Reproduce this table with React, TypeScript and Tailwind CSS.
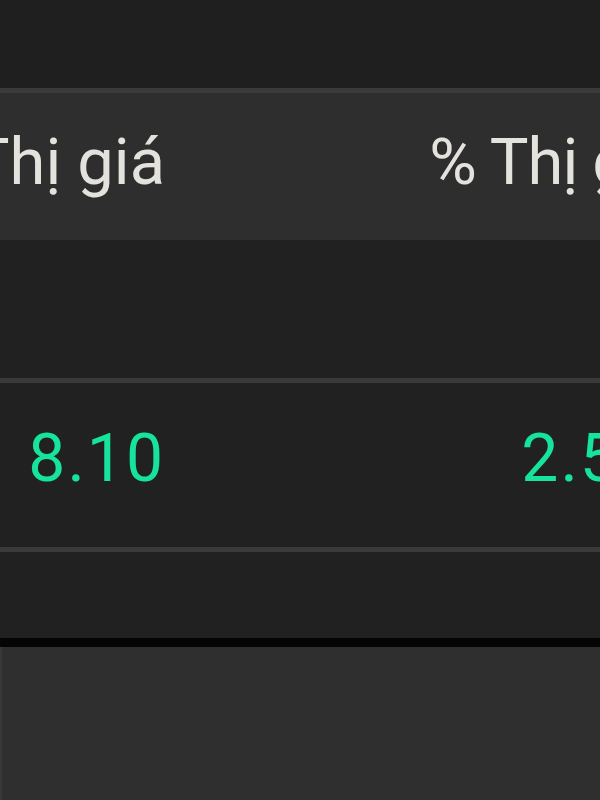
export default function App() {
  const cols = [
    { head: 'Thị giá', value: '8.10', headWidth: 'w-[165px]', valueWidth: 'w-[165px]' },
    { head: '% Thị giá', value: '2.50', headWidth: 'w-[512px]', valueWidth: 'w-[493px]' },
  ];

  return (
    <div className="w-[600px] h-[800px] overflow-hidden bg-[#1f1f1f] flex flex-col font-['Roboto',sans-serif]">
      {/* toolbar gap */}
      <div className="h-[88px] shrink-0 bg-[#1f1f1f]" />

      {/* Header */}
      <div className="h-[152px] shrink-0 border-t-[5px] border-[#3a3a3a] bg-[#2e2e2e] flex items-center pb-[8px]">
        {cols.map((c, i) => (
          <div key={c.head} className={`${c.headWidth} shrink-0 flex justify-end whitespace-nowrap`}>
            <span
              className={`text-[65px] leading-none text-[#e4e2dc] ${i === 1 ? 'tracking-[-1px]' : ''}`}
            >
              {c.head}
            </span>
          </div>
        ))}
      </div>

      {/* Empty row */}
      <div className="h-[143px] shrink-0 bg-[#212121] border-b-[5px] border-[#3a3a3a]" />

      {/* Value row */}
      <div className="h-[169px] shrink-0 bg-[#212121] border-b-[5px] border-[#3a3a3a] flex items-center pb-[12px]">
        {cols.map((c) => (
          <div key={c.head} className={`${c.valueWidth} shrink-0 flex justify-end whitespace-nowrap`}>
            <span className="text-[66px] leading-none text-[#16e39c] tracking-[2px]">{c.value}</span>
          </div>
        ))}
      </div>

      <div className="h-[86px] shrink-0 bg-[#212121]" />
      <div className="h-[9px] shrink-0 bg-[#050505]" />

      {/* Bottom panel */}
      <div className="flex-1 bg-[#2f2f2f] border-l-2 border-[#383838]" />
    </div>
  );
}
